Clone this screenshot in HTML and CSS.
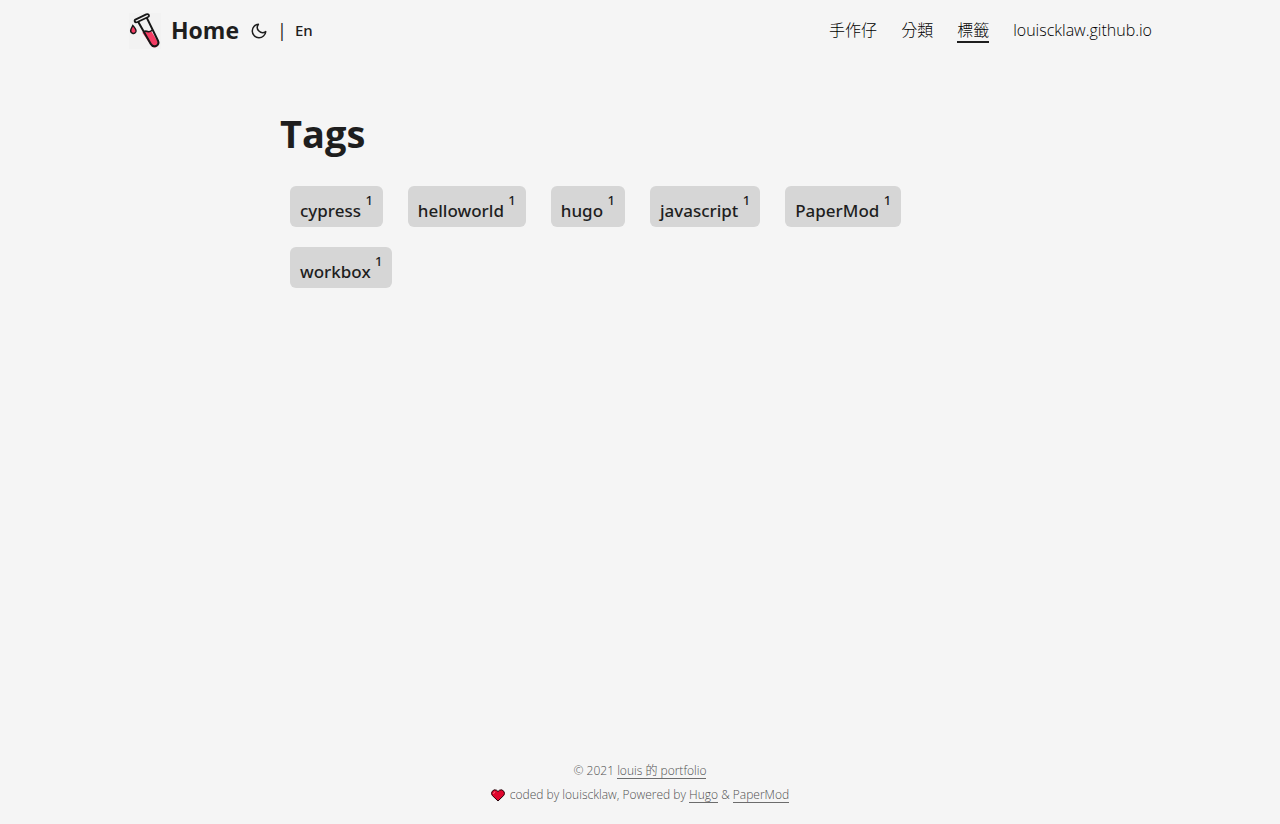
FILE: index.html
```html
<!DOCTYPE html>
<html lang="zh-Hant">
<head>
<meta charset="utf-8">
<meta name="viewport" content="width=device-width, initial-scale=1">
<title>Tags</title>
<link rel="stylesheet" href="styles.css">
</head>
<body>
<header class="header">
  <nav class="nav" aria-label="Main">
    <div class="brand">
      <a class="home" href="#">
        <svg class="logo" viewBox="0 0 32 36" aria-hidden="true">
          <rect width="32" height="36" fill="#f2f2f2"/>
          <path d="M13.2 19.5 22 17.8 29.4 29.8Q30.3 32.5 27.6 34 24.8 35.2 22.7 33.2Z" fill="#f43b63"/>
          <path d="M9 8.5 21.8 31Q23.7 34.2 27 33 30.6 31 29 27.7L17.7 4.6" fill="none" stroke="#171717" stroke-width="2"/>
          <path d="M14.5 18.7Q16.8 17.6 18.6 18.5T23.4 17" fill="none" stroke="#171717" stroke-width="1.6"/>
          <path d="M6.4 6.6 17.2 1.4Q19.5.7 20 2.3 20.4 3.4 18.6 4.3L8.5 9Q6.4 9.8 5.8 8.5 5.3 7.3 6.4 6.6Z" fill="#f5f5f5" stroke="#171717" stroke-width="1.8"/>
          <path d="M3.8 12.4Q8 16.8 6.8 19 5.4 21.3 3.2 20.1 .9 18.8 2 16.2Z" fill="#f43b63" stroke="#171717" stroke-width="1.4"/>
        </svg>
        <span>Home</span>
      </a>
      <button class="theme" type="button" aria-label="Toggle theme">
        <svg viewBox="0 0 24 24" width="18" height="18" fill="none" stroke="currentColor" stroke-width="2" stroke-linecap="round" stroke-linejoin="round" aria-hidden="true"><path d="M21 12.79A9 9 0 1 1 11.21 3 7 7 0 0 0 21 12.79z"/></svg>
      </button>
      <span class="divider">|</span>
      <a class="lang" href="#">En</a>
    </div>
    <ul class="menu">
      <li><a href="#">手作仔</a></li>
      <li><a href="#">分類</a></li>
      <li><a class="active" href="#" aria-current="page">標籤</a></li>
      <li><a href="#">louiscklaw.github.io</a></li>
    </ul>
  </nav>
</header>
<main class="main">
  <h1 class="title">Tags</h1>
  <ul class="tags">
    <li><a href="#">cypress <sup>1</sup></a></li>
    <li><a href="#">helloworld <sup>1</sup></a></li>
    <li><a href="#">hugo <sup>1</sup></a></li>
    <li><a href="#">javascript <sup>1</sup></a></li>
    <li><a href="#">PaperMod <sup>1</sup></a></li>
    <li><a href="#">workbox <sup>1</sup></a></li>
  </ul>
</main>
<footer class="footer">
  <p>© 2021 <a href="#">louis 的 portfolio</a></p>
  <p><svg class="heart" viewBox="0 0 14 13" aria-hidden="true"><path d="M7 12 1.2 6.4Q-.2 4.4 1.2 2.3 3-.1 5.5 1.2L7 2.6 8.5 1.2Q11-.1 12.8 2.3 14.2 4.4 12.8 6.4Z" fill="#e0052d" stroke="#240008" stroke-width="1"/><path d="M2.6 4.8Q2.6 3.2 4.2 2.8" fill="none" stroke="#ff7d88" stroke-width="1"/></svg>coded by louiscklaw, Powered by <a href="#">Hugo</a> &amp; <a href="#">PaperMod</a></p>
</footer>
</body>
</html>
```
FILE: styles.css
```css
* {
  box-sizing: border-box;
}

body {
  margin: 0;
  min-height: 100vh;
  display: flex;
  flex-direction: column;
  background: #f5f5f5;
  color: #1e1e1e;
  font-family: "Open Sans", "Noto Sans", "Noto Sans CJK TC", sans-serif;
  font-size: 15px;
}

a {
  color: inherit;
  text-decoration: none;
}

ul {
  list-style: none;
  margin: 0;
  padding: 0;
}

.nav {
  display: flex;
  flex-wrap: wrap;
  justify-content: space-between;
  max-width: 1072px;
  margin: 0 auto;
  padding: 0 24px;
  line-height: 61px;
}

.brand,
.home {
  display: flex;
  align-items: center;
}

.home {
  gap: 9px;
  font-size: 23px;
  font-weight: 700;
}

.logo {
  width: 34px;
  height: 36px;
}

.theme {
  display: flex;
  margin: 0 9px 0 11px;
  padding: 0;
  border: 0;
  background: none;
  color: inherit;
}

.divider {
  font-size: 18px;
}

.lang {
  margin-left: 8px;
  font-family: "Noto Sans", sans-serif;
  font-weight: 500;
}

.menu {
  display: flex;
  gap: 24px;
}

.menu a {
  font-size: 16px;
  font-weight: 300;
  color: #000;
}

.menu .active {
  display: inline-block;
  line-height: 22px;
  border-bottom: 2px solid #1e1e1e;
}

.main {
  flex: 1;
  width: 100%;
  max-width: 768px;
  margin: 0 auto;
  padding: 46px 24px 24px;
}

.title {
  margin: 0;
  font-size: 38px;
  line-height: 52px;
}

.tags {
  display: flex;
  flex-wrap: wrap;
  gap: 20px 25px;
  padding: 27px 10px 0;
}

.tags a {
  display: block;
  height: 41px;
  padding: 4px 10px 0;
  border-radius: 6px;
  background: #d6d6d6;
  font-family: "Noto Sans", sans-serif;
  font-size: 17px;
  font-weight: 500;
  line-height: 41px;
}

.tags sup {
  font-size: 13px;
  line-height: 0;
  vertical-align: 12px;
}

.footer {
  padding: 0 24px 17px;
  color: #505050;
  font-size: 12px;
  font-weight: 300;
  line-height: 24px;
  text-align: center;
}

.footer p {
  margin: 0;
}

.footer a {
  display: inline-block;
  line-height: 15px;
  border-bottom: 1px solid #6c6c6c;
}

.heart {
  width: 14px;
  height: 13px;
  margin-right: 5px;
  vertical-align: -3px;
}
```
